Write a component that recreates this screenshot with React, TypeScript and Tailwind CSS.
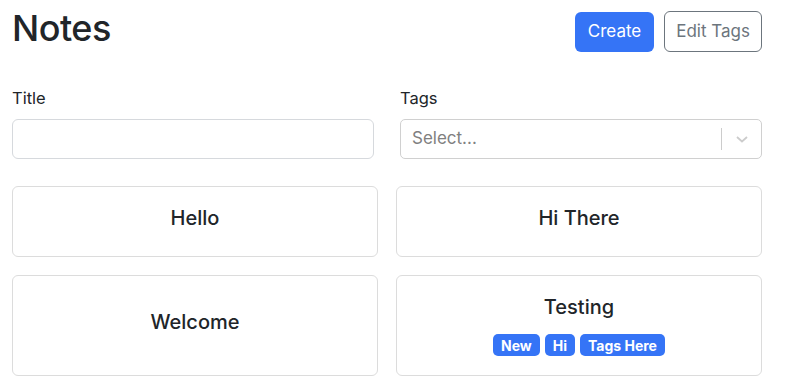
import React from "react";

const notes = [
  { title: "Hello", tags: [] as string[] },
  { title: "Hi There", tags: [] as string[] },
  { title: "Welcome", tags: [] as string[] },
  { title: "Testing", tags: ["New", "Hi", "Tags Here"] },
];

export default function App() {
  return (
    <div className="min-h-[390px] bg-white text-[#212529]" style={{ fontFamily: "Inter, 'Liberation Sans', sans-serif" }}>
      <div className="w-[750px] ml-[12px]">
        <div className="flex items-start justify-between pt-[8px] h-[56px]">
          <h1 className="text-[36px] font-medium leading-[40px] tracking-[-0.5px]">Notes</h1>
          <div className="flex gap-[10px] items-center mt-[3px]">
            <button className="h-[40px] px-[13px] rounded-[6px] bg-[#3574f6] text-white text-[17px]">Create</button>
            <button className="h-[41px] px-[11px] rounded-[6px] border border-[#6c757d] text-[#6c757d] text-[17px]">Edit Tags</button>
          </div>
        </div>
        <div className="grid grid-cols-2 gap-x-[26px] mt-[31px]">
          <div>
            <div className="text-[16.5px] leading-[22px] mb-[10px]">Title</div>
            <div className="h-[40px] border border-[#d6d9dd] rounded-[6px] bg-white"></div>
          </div>
          <div>
            <div className="text-[16.5px] leading-[22px] mb-[10px]">Tags</div>
            <div className="h-[40px] border border-[#d0d0d0] rounded-[5px] bg-white flex items-center">
              <span className="flex-1 pl-[11px] text-[17px] text-[#808080]">Select...</span>
              <span className="w-px h-[22px] bg-[#cccccc]"></span>
              <span className="w-[39px] flex items-center justify-center">
                <svg width="14" height="10" viewBox="0 0 14 10" fill="none">
                  <path d="M2 3 L7 7.5 L12 3" stroke="#cccccc" strokeWidth="1.8" />
                </svg>
              </span>
            </div>
          </div>
        </div>
        <div className="grid grid-cols-2 gap-x-[18px] gap-y-[18px] mt-[27px]">
          {notes.map((n) => (
            <div
              key={n.title}
              className={`border border-[#dcdcdc] rounded-[6px] bg-white flex flex-col items-center justify-center ${n.tags.length ? "min-h-[101px] pb-[2px]" : "min-h-[71px] pb-[8px]"}`}
            >
              <div className="text-[20px] font-medium leading-[28px]">{n.title}</div>
              {n.tags.length > 0 && (
                <div className="flex gap-[5px] mt-[13px]">
                  {n.tags.map((t) => (
                    <span key={t} className="h-[22px] px-[8px] rounded-[5px] bg-[#3574f6] text-white text-[14px] font-bold flex items-center">
                      {t}
                    </span>
                  ))}
                </div>
              )}
            </div>
          ))}
        </div>
      </div>
    </div>
  );
}
